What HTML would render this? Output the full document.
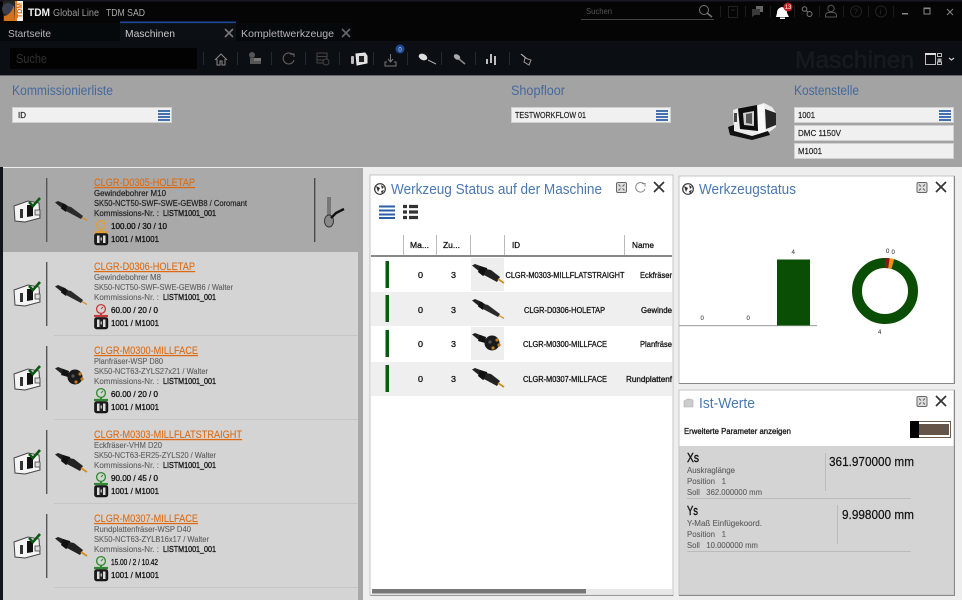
<!DOCTYPE html>
<html><head><meta charset="utf-8"><title>TDM Global Line</title>
<style>
html,body{margin:0;padding:0;background:#eee;width:962px;height:600px;overflow:hidden}
svg{display:block}
text{font-family:"Liberation Sans",sans-serif;white-space:pre}
.t{font-size:8.5px;fill:#222;stroke:#222;stroke-width:.2}
.g{font-size:8.5px;fill:#5f5f5f;stroke:#5f5f5f;stroke-width:.12}
.b{font-size:8.5px;fill:#111;stroke:#111;stroke-width:.3}
.h{fill:#46699c}
.l{font-size:11px;fill:#dd6a10;stroke:#dd6a10;stroke-width:.1;text-decoration:underline}
.s{font-size:6px;fill:#444;stroke:#444;stroke-width:.1}
</style></head><body>
<svg width="962" height="600" viewBox="0 0 962 600" xmlns="http://www.w3.org/2000/svg">
<defs>
<g id="mach">
<path d="M1 9 L15 4 L26 6 L27 21 L12 25 L2 24Z" fill="#f4f4f4" stroke="#444" stroke-width="1"/>
<rect x="7" y="12" width="3" height="9" fill="#333"/>
<path d="M14 8 L20 8 L20 19 L14 20Z" fill="#111"/>
<rect x="22" y="13" width="5" height="5" fill="#ddd" stroke="#444" stroke-width=".8"/>
<path d="M16 5 L20 9 L27 1" fill="none" stroke="#0b5a12" stroke-width="2.6"/>
</g>
<g id="tool">
<path d="M0 1.5 L3 0 L11 3.5 L8 8Z" fill="#222"/>
<path d="M8 2.5 L13 5 L11 11 L6 7.5Z" fill="#111"/>
<path d="M12 5 L16 6 L28 15 L26 18 L11 10Z" fill="#2a2a2a"/>
<path d="M27 16.5 L32 19.5" stroke="#d88a1a" stroke-width="1.3"/>
</g>
<g id="tool2">
<path d="M0 1.5 L3 0 L11 3 L8 8Z" fill="#222"/>
<path d="M8 2 L15 4 L16 9 L11 12 L6 8Z" fill="#111"/>
<path d="M14 5 L19 6 L28 13 L25 18 L12 11Z" fill="#222"/>
<path d="M26 15 L32 19" stroke="#d88a1a" stroke-width="1.8"/>
</g>
<g id="tool3">
<path d="M0 1.5 L3 0 L11 3 L8 8Z" fill="#222"/>
<path d="M8 2 L14 4 L13 10 L6 8Z" fill="#111"/>
<circle cx="20" cy="10" r="7.5" fill="#1a1a1a"/>
<circle cx="25" cy="7" r="1.6" fill="#c07a20"/><circle cx="27" cy="12" r="1.6" fill="#c07a20"/><circle cx="21" cy="15" r="1.6" fill="#c07a20"/><circle cx="18" cy="9" r="1.6" fill="#555"/>
</g>
<g id="cost">
<rect x="0.7" y="0.7" width="13" height="11" rx="2" fill="#1c1c1c" stroke="#111"/>
<rect x="3" y="2.5" width="8.5" height="7.5" fill="#ddd"/>
<rect x="5.5" y="2.5" width="3.5" height="7.5" fill="#222"/>
<rect x="6.6" y="4.5" width="1.3" height="3" fill="#ccc"/>
</g>
<g id="gauge">
<circle cx="7" cy="5" r="4.4" fill="none" stroke-width="1.3"/>
<path d="M7 5 L9 3" stroke-width="1" fill="none"/>
<path d="M6 10 L8 10" stroke-width="2"/>
<path d="M0 12 L14 12" stroke-width="2.2"/>
</g>
<g id="lines"><path d="M0 1 H12 M0 4 H12 M0 7 H12 M0 10 H12" stroke="#2a5ea8" stroke-width="1.7" fill="none"/></g>
<g id="x"><path d="M0 0 L10 10 M10 0 L0 10" stroke="#333" stroke-width="1.7" fill="none"/></g>
<g id="max"><rect x="0.5" y="0.5" width="10" height="10" rx="1.5" fill="#ddd" stroke="#666"/><path d="M2.5 2.5 L4.5 4.5 M8.5 2.5 L6.5 4.5 M2.5 8.5 L4.5 6.5 M8.5 8.5 L6.5 6.5" stroke="#666" stroke-width="1.1"/></g>
<g id="globe"><circle cx="6" cy="6" r="5.3" fill="#fff" stroke="#333" stroke-width="1.2"/><path d="M2 3 L6 5 L4 9 Z M7 2 L10 4 L8 6 Z M7 8 L10 7 L8 11Z" fill="#333"/></g>
</defs>

<!-- title bar -->
<rect width="962" height="41" fill="#050506"/>
<rect width="962" height="1.5" fill="#1a1822"/>
<rect x="3" y="1" width="20" height="20" fill="#f5f0ea"/>
<rect x="3" y="1" width="12" height="20" fill="#2a2220"/>
<circle cx="8" cy="9" r="6" fill="#3a3f50"/>
<path d="M4 16 Q11 15 14 5 L15 21 L4 21Z" fill="#d2721a"/>
<rect x="15" y="1" width="2" height="20" fill="#e27a1c"/>
<text transform="translate(22 18) rotate(-90)" font-size="7.5" font-weight="bold" fill="#d96a10" textLength="15" lengthAdjust="spacingAndGlyphs">TDM</text>
<text x="28" y="16" font-size="11" font-weight="bold" fill="#f0f0f0" textLength="22" lengthAdjust="spacingAndGlyphs">TDM</text>
<text x="53" y="16" font-size="10.5" fill="#9a9a9a" textLength="46" lengthAdjust="spacingAndGlyphs">Global Line</text>
<text x="106" y="16" font-size="10.5" fill="#aaa" textLength="39" lengthAdjust="spacingAndGlyphs">TDM SAD</text>

<text x="586" y="14" font-size="8" fill="#555" textLength="26" lengthAdjust="spacingAndGlyphs">Suchen</text>
<rect x="581" y="19" width="133" height="1" fill="#444"/>
<circle cx="704" cy="10" r="4.5" fill="none" stroke="#777" stroke-width="1"/><path d="M707 13 L712 17" stroke="#777" stroke-width="1.5"/>
<g stroke="#1c1c1c"><path d="M720.5 6V17M745.5 6V17M770.5 6V17M794.5 6V17M819.5 6V17M843.5 6V17M868.5 6V17M893.5 6V17"/></g>
<rect x="728.5" y="6.5" width="9" height="11" fill="none" stroke="#222"/><path d="M731 10h4" stroke="#222"/>
<path d="M752 9 h8 v6 h-5 l-3 2z" fill="#3a3a3a"/><path d="M756 6 h7 v6 h-3 v-3 h-4z" fill="#666"/>
<path d="M782 7 Q777 8 777 13 L776 17 H789 L787 13 Q787 8 782 7Z" fill="#fff"/><rect x="780" y="17.5" width="5" height="1.5" fill="#fff"/>
<circle cx="788" cy="7" r="4.5" fill="#c01a20"/><text x="784.7" y="9.2" font-size="6.5" fill="#fff" textLength="6.6" lengthAdjust="spacingAndGlyphs">13</text>
<circle cx="804.5" cy="9" r="2.3" fill="none" stroke="#777"/><circle cx="809.5" cy="14" r="2.5" fill="none" stroke="#777"/><path d="M806 10.5L808 12" stroke="#777"/>
<circle cx="831" cy="8.5" r="3.2" fill="none" stroke="#555"/><path d="M825.5 17 V15 Q826 12.5 829 12.5 H833 Q836 12.5 836.5 15 V17Z" fill="none" stroke="#555"/>
<circle cx="856" cy="11.5" r="5.5" fill="none" stroke="#222"/><text x="853.5" y="14.5" font-size="8" fill="#2a2a2a">?</text>
<circle cx="881" cy="11.5" r="5.5" fill="none" stroke="#222"/><text x="879.8" y="14.5" font-size="8" fill="#2a2a2a">i</text>
<rect x="902" y="13" width="6" height="1.5" fill="#888"/>
<rect x="924" y="8" width="6" height="6" fill="none" stroke="#888"/><rect x="924" y="7.5" width="6" height="1.6" fill="#888"/>
<path d="M947 9 L953 15 M953 9 L947 15" stroke="#888" stroke-width="1"/>

<!-- tabs -->
<rect x="0" y="23" width="120" height="18" fill="#06090c"/>
<text x="8" y="37" font-size="10.5" fill="#b5b5b5" textLength="43" lengthAdjust="spacingAndGlyphs">Startseite</text>
<rect x="120" y="23" width="116" height="18" fill="#0c1014"/>
<rect x="120" y="21.5" width="116" height="1.6" fill="#1b4a96"/>
<text x="125" y="37" font-size="10.5" fill="#c8c8c8" textLength="50" lengthAdjust="spacingAndGlyphs">Maschinen</text>
<path d="M225 29 L233 37 M233 29 L225 37" stroke="#777" stroke-width="1.6"/>
<rect x="236" y="23" width="116" height="18" fill="#06090c"/>
<text x="241" y="37" font-size="10.5" fill="#b5b5b5" textLength="93" lengthAdjust="spacingAndGlyphs">Komplettwerkzeuge</text>
<path d="M342 29 L350 37 M350 29 L342 37" stroke="#666" stroke-width="1.6"/>

<!-- toolbar -->
<rect x="0" y="41" width="962" height="34" fill="#0b0f13"/>
<rect x="10" y="48" width="187" height="21" fill="#020203"/>
<text x="16" y="63" font-size="12.5" fill="#2f2f2f" textLength="31" lengthAdjust="spacingAndGlyphs">Suche</text>
<g stroke="#252a2e"><path d="M203.5 52V65M237.5 52V65M271.5 52V65M305.5 52V65M339.5 52V65M373.5 52V65M407.5 52V65M441.5 52V65M475.5 52V65M509.5 52V65"/></g>
<path d="M215 60 L221 54 L227 60 M217 59 V65 H220 V61 H222 V65 H225 V59" fill="none" stroke="#888" stroke-width="1"/>
<circle cx="252" cy="55" r="3" fill="#555"/><rect x="250" y="58" width="11" height="6" fill="#555"/><rect x="254" y="58" width="7" height="3" fill="#777"/>
<path d="M293 55 A5.5 5.5 0 1 0 294 60" fill="none" stroke="#666" stroke-width="1"/><path d="M290 54 H294 V57" fill="none" stroke="#666"/>
<rect x="317" y="53" width="10" height="10" fill="none" stroke="#444"/><path d="M317 56.5H327M317 60H327" stroke="#444"/><circle cx="326" cy="62" r="3" fill="#0b0f13" stroke="#444"/>
<rect x="351" y="56" width="3" height="8" rx="1" fill="#bbb"/><path d="M356 54 L365 53 L367 56 V63 L357 65Z" fill="#ddd" stroke="#eee"/><rect x="359" y="56" width="5" height="6" fill="#222"/>
<path d="M387 62 H385 V66 H396 V62 H394 M390.5 54 V62 M388 59 L390.5 62 L393 59" fill="none" stroke="#777" stroke-width="1"/>
<circle cx="400" cy="49" r="4.5" fill="#1b4a96"/><text x="398.4" y="51.3" font-size="6" fill="#ddd">0</text>
<ellipse cx="423" cy="57" rx="4.5" ry="3" fill="#ddd" transform="rotate(25 423 57)"/><path d="M428 60 L436 64" stroke="#aaa" stroke-width="1"/>
<ellipse cx="457" cy="57" rx="3.5" ry="2.5" fill="#aaa" transform="rotate(35 457 57)"/><path d="M459 59 L465 64" stroke="#888" stroke-width="1.6"/>
<path d="M487 59 V64 M491 54 V63 M495 56 V65" stroke="#ddd" stroke-width="1.7"/>
<path d="M521 54 L526 58" stroke="#ccc" stroke-width="1"/><path d="M525 58 L531 60 L529 65 L524 62Z" fill="none" stroke="#999"/>
<text x="795" y="68" font-size="24" fill="#171b1f" stroke="#171b1f" stroke-width=".6" textLength="119" lengthAdjust="spacingAndGlyphs">Maschinen</text>
<rect x="925.5" y="53.5" width="10" height="11" fill="none" stroke="#bbb"/><rect x="925" y="53" width="11" height="2" fill="#ddd"/>
<rect x="937.5" y="53.5" width="4" height="3" fill="none" stroke="#bbb"/><rect x="937.5" y="58.5" width="4" height="3" fill="#aaa"/><rect x="937.5" y="62" width="4" height="2.5" fill="none" stroke="#bbb"/>
<path d="M949 58 L951.5 60 L954 58" fill="none" stroke="#ccc" stroke-width="1.2"/>

<!-- grey header -->
<rect x="0" y="75" width="962" height="92" fill="#a3a3a3"/>
<rect x="0" y="75" width="962" height="1" fill="#666"/>
<text class="h" x="12" y="95" font-size="13.5" textLength="101" lengthAdjust="spacingAndGlyphs">Kommissionierliste</text>
<rect x="12.5" y="107.5" width="159" height="15" fill="#f0f0f0" stroke="#d0d0d0"/>
<text class="t" x="18" y="118" textLength="8" lengthAdjust="spacingAndGlyphs">ID</text>
<use href="#lines" x="158" y="110"/>
<text class="h" x="511" y="95" font-size="13.5" textLength="54" lengthAdjust="spacingAndGlyphs">Shopfloor</text>
<rect x="511.5" y="107.5" width="159" height="15" fill="#f0f0f0" stroke="#d0d0d0"/>
<text class="t" x="515" y="118" textLength="71" lengthAdjust="spacingAndGlyphs">TESTWORKFLOW 01</text>
<use href="#lines" x="656" y="110"/>
<text class="h" x="794" y="95" font-size="13.5" textLength="65" lengthAdjust="spacingAndGlyphs">Kostenstelle</text>
<rect x="794.5" y="107.5" width="159" height="15" fill="#f0f0f0" stroke="#d0d0d0"/>
<text class="t" x="798" y="118" textLength="17" lengthAdjust="spacingAndGlyphs">1001</text>
<use href="#lines" x="939" y="110"/>
<rect x="794.5" y="125.5" width="159" height="15" fill="#f0f0f0" stroke="#d0d0d0"/>
<text class="t" x="798" y="136" textLength="43" lengthAdjust="spacingAndGlyphs">DMC 1150V</text>
<rect x="794.5" y="143.5" width="159" height="15" fill="#f0f0f0" stroke="#d0d0d0"/>
<text class="t" x="798" y="154" textLength="24" lengthAdjust="spacingAndGlyphs">M1001</text>
<!-- machine image -->
<path d="M733 110 L739 108 L758 105 L764 103 L772 107 L776 113 L776 127 L764 136 L752 136 L734 131Z" fill="#ececec"/>
<path d="M738 108.500 L757 105 L758 131 L740 129Z" fill="#0d0d0d"/>
<path d="M743 113 L754 111 L754 126 L744 125Z" fill="#cfcfcf"/>
<path d="M746 114 L752 113 L752 124 L746 123Z" fill="#555"/>
<path d="M765 109 L776 113 L776 125 L766 129Z" fill="#262626"/>
<path d="M758 106 L764 104 L765 134 L758 135Z" fill="#fafafa"/>
<path d="M728 127 L734 125 L734 131 L752 136 L768 131 L770 135 L752 140 L730 135Z" fill="#111"/>
<rect x="734" y="113" width="3" height="9" fill="#444"/>

<!-- left list -->
<rect x="0" y="167" width="3" height="433" fill="#14141c"/>
<rect x="3" y="168" width="355" height="432" fill="#d4d4d4"/>
<rect x="3" y="168" width="355" height="84" fill="#a9a9a9"/>
<rect x="358" y="168" width="5" height="432" fill="#a8a8a8"/>
<rect x="363" y="168" width="7" height="432" fill="#eee"/>
<path d="M54 335.500H358M54 419.500H358M54 503.500H358M54 587.500H358" stroke="#c6c6c6"/>
<g stroke="#555" stroke-width="1.4"><path d="M46.700 178V242M46.700 262V326M46.700 346V410M46.700 430V494M46.700 514V578"/></g>
<path d="M314.700 178V242" stroke="#444" stroke-width="1.300"/>
<rect x="327" y="197" width="4" height="18" fill="#777"/>
<ellipse cx="329" cy="221" rx="4.500" ry="6" fill="#8a8a8a" stroke="#333" stroke-width="1"/>
<path d="M331 218 L336 213 L344 209" fill="none" stroke="#111" stroke-width="2.400"/>
<use href="#mach" x="13" y="197"/><use href="#mach" x="13" y="281"/><use href="#mach" x="13" y="365"/><use href="#mach" x="13" y="449"/><use href="#mach" x="13" y="533"/>
<use href="#tool" x="55" y="201"/><use href="#tool" x="55" y="285"/><use href="#tool3" x="55" y="367"/><use href="#tool2" x="55" y="453"/><use href="#tool2" x="55" y="537"/>

<text class="l" x="94" y="186" textLength="101" lengthAdjust="spacingAndGlyphs">CLGR-D0305-HOLETAP</text>
<text class="t" x="94" y="196" textLength="72" lengthAdjust="spacingAndGlyphs">Gewindebohrer M10</text>
<text class="t" x="94" y="206" textLength="153" lengthAdjust="spacingAndGlyphs">SK50-NCT50-SWF-SWE-GEWB8 / Coromant</text>
<text class="t" x="94" y="216" textLength="65" lengthAdjust="spacingAndGlyphs">Kommissions-Nr. :</text>
<text class="b" x="163" y="216" textLength="53" lengthAdjust="spacingAndGlyphs">LISTM1001_001</text>
<use href="#gauge" x="94" y="220" stroke="#e0a030" fill="#e0a030"/>
<text class="b" x="111" y="229" textLength="56" lengthAdjust="spacingAndGlyphs">100.00 / 30 / 10</text>
<use href="#cost" x="94" y="233"/>
<text class="b" x="111" y="242" textLength="48" lengthAdjust="spacingAndGlyphs">1001 / M1001</text>

<text class="l" x="94" y="270" textLength="101" lengthAdjust="spacingAndGlyphs">CLGR-D0306-HOLETAP</text>
<text class="g" x="94" y="280" textLength="67" lengthAdjust="spacingAndGlyphs">Gewindebohrer M8</text>
<text class="g" x="94" y="290" textLength="139" lengthAdjust="spacingAndGlyphs">SK50-NCT50-SWF-SWE-GEWB6 / Walter</text>
<text class="g" x="94" y="300" textLength="65" lengthAdjust="spacingAndGlyphs">Kommissions-Nr. :</text>
<text class="b" x="163" y="300" textLength="53" lengthAdjust="spacingAndGlyphs">LISTM1001_001</text>
<use href="#gauge" x="94" y="304" stroke="#c8383c" fill="#c8383c"/>
<text class="b" x="111" y="313" textLength="47" lengthAdjust="spacingAndGlyphs">60.00 / 20 / 0</text>
<use href="#cost" x="94" y="317"/>
<text class="b" x="111" y="326" textLength="48" lengthAdjust="spacingAndGlyphs">1001 / M1001</text>

<text class="l" x="94" y="354" textLength="104" lengthAdjust="spacingAndGlyphs">CLGR-M0300-MILLFACE</text>
<text class="g" x="94" y="364" textLength="69" lengthAdjust="spacingAndGlyphs">Planfräser-WSP D80</text>
<text class="g" x="94" y="374" textLength="114" lengthAdjust="spacingAndGlyphs">SK50-NCT63-ZYLS27x21 / Walter</text>
<text class="g" x="94" y="384" textLength="65" lengthAdjust="spacingAndGlyphs">Kommissions-Nr. :</text>
<text class="b" x="163" y="384" textLength="53" lengthAdjust="spacingAndGlyphs">LISTM1001_001</text>
<use href="#gauge" x="94" y="388" stroke="#2f8a2f" fill="#2f8a2f"/>
<text class="b" x="111" y="397" textLength="47" lengthAdjust="spacingAndGlyphs">60.00 / 20 / 0</text>
<use href="#cost" x="94" y="401"/>
<text class="b" x="111" y="410" textLength="48" lengthAdjust="spacingAndGlyphs">1001 / M1001</text>

<text class="l" x="94" y="438" textLength="148" lengthAdjust="spacingAndGlyphs">CLGR-M0303-MILLFLATSTRAIGHT</text>
<text class="g" x="94" y="448" textLength="68" lengthAdjust="spacingAndGlyphs">Eckfräser-VHM D20</text>
<text class="g" x="94" y="458" textLength="122" lengthAdjust="spacingAndGlyphs">SK50-NCT63-ER25-ZYLS20 / Walter</text>
<text class="g" x="94" y="468" textLength="65" lengthAdjust="spacingAndGlyphs">Kommissions-Nr. :</text>
<text class="b" x="163" y="468" textLength="53" lengthAdjust="spacingAndGlyphs">LISTM1001_001</text>
<use href="#gauge" x="94" y="472" stroke="#2f8a2f" fill="#2f8a2f"/>
<text class="b" x="111" y="481" textLength="47" lengthAdjust="spacingAndGlyphs">90.00 / 45 / 0</text>
<use href="#cost" x="94" y="485"/>
<text class="b" x="111" y="494" textLength="48" lengthAdjust="spacingAndGlyphs">1001 / M1001</text>

<text class="l" x="94" y="522" textLength="104" lengthAdjust="spacingAndGlyphs">CLGR-M0307-MILLFACE</text>
<text class="g" x="94" y="532" textLength="97" lengthAdjust="spacingAndGlyphs">Rundplattenfräser-WSP D40</text>
<text class="g" x="94" y="542" textLength="115" lengthAdjust="spacingAndGlyphs">SK50-NCT63-ZYLB16x17 / Walter</text>
<text class="g" x="94" y="552" textLength="65" lengthAdjust="spacingAndGlyphs">Kommissions-Nr. :</text>
<text class="b" x="163" y="552" textLength="53" lengthAdjust="spacingAndGlyphs">LISTM1001_001</text>
<use href="#gauge" x="94" y="556" stroke="#2f8a2f" fill="#2f8a2f"/>
<text class="b" x="111" y="565" textLength="47" lengthAdjust="spacingAndGlyphs">15.00 / 2 / 10.42</text>
<use href="#cost" x="94" y="569"/>
<text class="b" x="111" y="578" textLength="48" lengthAdjust="spacingAndGlyphs">1001 / M1001</text>

<!-- right bg -->
<rect x="363" y="167" width="599" height="433" fill="#eeeeee"/>

<!-- Panel 1 -->
<rect x="370" y="175" width="303" height="420" fill="#fff" stroke="#c4c4c4" stroke-width="1"/>
<path d="M370.500 595.500H673.500" stroke="#999"/>
<use href="#globe" x="374" y="183"/>
<text x="391" y="194" font-size="15" fill="#4a78b0" textLength="211" lengthAdjust="spacingAndGlyphs">Werkzeug Status auf der Maschine</text>
<use href="#max" x="616" y="182"/>
<path d="M644 184 A4.800 4.800 0 1 0 645 189" fill="none" stroke="#888"/><path d="M642 183.500 H645 V186.500" fill="none" stroke="#888"/>
<use href="#x" x="654" y="182"/>
<path d="M379 206.500H395M379 210.500H395M379 214.500H395M379 218H395" stroke="#2a5ea8" stroke-width="2"/>
<path d="M403 206.500H407M409 206.500H418M403 212H407M409 212H418M403 217.500H407M409 217.500H418" stroke="#333" stroke-width="3.200"/>
<g stroke="#bbb"><path d="M403.500 235V255M436.500 235V255M470.500 235V255M504.500 235V255M624.500 235V255"/></g>
<rect x="371" y="255" width="301" height="2" fill="#888"/>
<text class="b" x="410" y="248" textLength="19" lengthAdjust="spacingAndGlyphs">Ma...</text>
<text class="b" x="443" y="248" textLength="17" lengthAdjust="spacingAndGlyphs">Zu...</text>
<text class="b" x="512" y="248" textLength="8" lengthAdjust="spacingAndGlyphs">ID</text>
<text class="b" x="632" y="248" textLength="22" lengthAdjust="spacingAndGlyphs">Name</text>
<rect x="371" y="292" width="301" height="34" fill="#efefef"/>
<rect x="371" y="362" width="301" height="34" fill="#efefef"/>
<rect x="471" y="258" width="33" height="33" fill="#eee"/><rect x="471" y="327" width="33" height="33" fill="#eee"/>
<g fill="#0a5a10"><rect x="385.500" y="261" width="3.500" height="27"/><rect x="385.500" y="295" width="3.500" height="27"/><rect x="385.500" y="330" width="3.500" height="27"/><rect x="385.500" y="365" width="3.500" height="27"/></g>
<use href="#tool2" x="472" y="264"/><use href="#tool" x="472" y="299"/><use href="#tool3" x="472" y="333"/><use href="#tool2" x="472" y="368"/>
<text class="b" x="418" y="278" textLength="5" lengthAdjust="spacingAndGlyphs">0</text><text class="b" x="451" y="278" textLength="5" lengthAdjust="spacingAndGlyphs">3</text>
<text class="b" x="418" y="313" textLength="5" lengthAdjust="spacingAndGlyphs">0</text><text class="b" x="451" y="313" textLength="5" lengthAdjust="spacingAndGlyphs">3</text>
<text class="b" x="418" y="347" textLength="5" lengthAdjust="spacingAndGlyphs">0</text><text class="b" x="451" y="347" textLength="5" lengthAdjust="spacingAndGlyphs">3</text>
<text class="b" x="418" y="382" textLength="5" lengthAdjust="spacingAndGlyphs">0</text><text class="b" x="451" y="382" textLength="5" lengthAdjust="spacingAndGlyphs">3</text>
<text class="b" x="505.500" y="278" textLength="119" lengthAdjust="spacingAndGlyphs">CLGR-M0303-MILLFLATSTRAIGHT</text>
<text class="b" x="524" y="313" textLength="81" lengthAdjust="spacingAndGlyphs">CLGR-D0306-HOLETAP</text>
<text class="b" x="523" y="347" textLength="84" lengthAdjust="spacingAndGlyphs">CLGR-M0300-MILLFACE</text>
<text class="b" x="523" y="382" textLength="84" lengthAdjust="spacingAndGlyphs">CLGR-M0307-MILLFACE</text>
<text class="b" x="640" y="278" textLength="32" lengthAdjust="spacingAndGlyphs">Eckfräser</text>
<text class="b" x="641" y="313" textLength="31" lengthAdjust="spacingAndGlyphs">Gewinde</text>
<text class="b" x="640" y="347" textLength="32" lengthAdjust="spacingAndGlyphs">Planfräse</text>
<text class="b" x="626" y="382" textLength="46" lengthAdjust="spacingAndGlyphs">Rundplattenf</text>
<rect x="372" y="589" width="300" height="5" fill="#e8e8e8"/>
<rect x="372" y="589" width="214" height="4.500" fill="#777"/>

<!-- Panel 2 -->
<rect x="679" y="176" width="275" height="207.500" fill="#fff" stroke="#c4c4c4" stroke-width="1"/>
<path d="M679 383.500H954.500V176" stroke="#888" fill="none"/>
<use href="#globe" x="682" y="183"/>
<text x="699" y="194" font-size="15" fill="#4a78b0" textLength="97" lengthAdjust="spacingAndGlyphs">Werkzeugstatus</text>
<use href="#max" x="916.500" y="182"/>
<use href="#x" x="936" y="182"/>
<rect x="679" y="325" width="138" height="1.200" fill="#aaa"/>
<rect x="777" y="259.500" width="33" height="66" fill="#0a4d05"/>
<text class="s" x="700.500" y="320">0</text><text class="s" x="746.500" y="320">0</text><text class="s" x="791.500" y="254">4</text>
<circle cx="885" cy="291" r="28" fill="none" stroke="#0a4d05" stroke-width="10"/>
<path d="M885 258 A33 33 0 0 1 889.600 258.300 L888.200 268.200 A23 23 0 0 0 885 268Z" fill="#8e1518"/>
<path d="M889.600 258.300 A33 33 0 0 1 894.200 259.300 L891.400 269 A23 23 0 0 0 888.200 268.200Z" fill="#f0921a"/>
<text class="s" x="886" y="253">0</text><text class="s" x="891.500" y="254">0</text><text class="s" x="878" y="334">4</text>

<!-- Panel 3 -->
<rect x="679" y="390" width="275" height="205" fill="#d4d4d4" stroke="#c4c4c4" stroke-width="1"/>
<path d="M679 595.500H954.500V390" stroke="#888" fill="none"/>
<rect x="679.500" y="390.500" width="274" height="55.500" fill="#fff"/>
<path d="M684 401 L688 399 L693 400 V407 H684Z" fill="#ccc" stroke="#aaa" stroke-width=".6"/>
<text x="699" y="408" font-size="15" fill="#4a78b0" textLength="56" lengthAdjust="spacingAndGlyphs">Ist-Werte</text>
<use href="#max" x="916.500" y="396"/>
<use href="#x" x="936" y="396"/>
<text class="b" x="684" y="434" textLength="107" lengthAdjust="spacingAndGlyphs">Erweiterte Parameter anzeigen</text>
<rect x="910.500" y="421.500" width="40" height="16" fill="#fff" stroke="#6b5a4a"/>
<rect x="913" y="424" width="36" height="11" fill="#655548"/>
<rect x="910" y="421" width="9" height="17" fill="#000"/>

<text x="687" y="462" font-size="13" fill="#111" stroke="#111" stroke-width=".4" textLength="12" lengthAdjust="spacingAndGlyphs">Xs</text>
<text class="g" x="687" y="473" textLength="48" lengthAdjust="spacingAndGlyphs">Auskraglänge</text>
<text class="g" x="687" y="484" textLength="39" lengthAdjust="spacingAndGlyphs">Position   1</text>
<text class="g" x="687" y="495" textLength="75" lengthAdjust="spacingAndGlyphs">Soll   362.000000 mm</text>
<rect x="825" y="453" width="1" height="38" fill="#bbb"/>
<text x="829" y="466" font-size="13" fill="#111" stroke="#111" stroke-width=".2" textLength="85" lengthAdjust="spacingAndGlyphs">361.970000 mm</text>
<rect x="687" y="498" width="224" height="1" fill="#bbb"/>
<text x="687" y="515" font-size="13" fill="#111" stroke="#111" stroke-width=".4" textLength="11" lengthAdjust="spacingAndGlyphs">Ys</text>
<text class="g" x="687" y="526" textLength="75" lengthAdjust="spacingAndGlyphs">Y-Maß Einfügekoord.</text>
<text class="g" x="687" y="537" textLength="39" lengthAdjust="spacingAndGlyphs">Position   1</text>
<text class="g" x="687" y="548" textLength="71" lengthAdjust="spacingAndGlyphs">Soll   10.000000 mm</text>
<rect x="837" y="505" width="1" height="39" fill="#bbb"/>
<text x="842" y="519" font-size="13" fill="#111" stroke="#111" stroke-width=".2" textLength="72" lengthAdjust="spacingAndGlyphs">9.998000 mm</text>
<rect x="687" y="551" width="224" height="1" fill="#bbb"/>
</svg>
</body></html>
